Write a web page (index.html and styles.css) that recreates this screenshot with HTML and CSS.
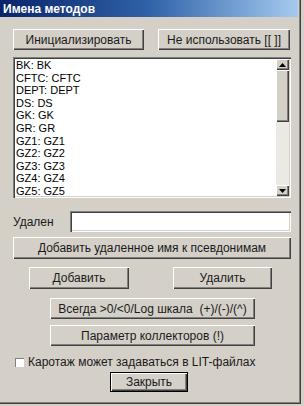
FILE: index.html
```html
<!DOCTYPE html>
<html lang="ru">
<head>
<meta charset="utf-8">
<title>Имена методов</title>
<link rel="stylesheet" href="styles.css">
</head>
<body>
<div class="window">
  <div class="titlebar"><span class="title">Имена методов</span></div>
  <div class="content">
    <div class="top-row">
      <div class="btn btn-init">Инициализировать</div>
      <div class="btn btn-skip">Не использовать [[ ]]</div>
    </div>
    <div class="listbox">
      <ul class="items">
        <li>BK: BK</li>
        <li>CFTC: CFTC</li>
        <li>DEPT: DEPT</li>
        <li>DS: DS</li>
        <li>GK: GK</li>
        <li>GR: GR</li>
        <li>GZ1: GZ1</li>
        <li>GZ2: GZ2</li>
        <li>GZ3: GZ3</li>
        <li>GZ4: GZ4</li>
        <li>GZ5: GZ5</li>
      </ul>
      <div class="scrollbar">
        <div class="sb-btn"><svg width="7" height="4" viewBox="0 0 7 4"><path d="M3.5 0 L7 4 L0 4 Z" fill="#000"/></svg></div>
        <div class="sb-thumb"></div>
        <div class="sb-track"></div>
        <div class="sb-btn"><svg width="7" height="4" viewBox="0 0 7 4"><path d="M0 0 L7 0 L3.5 4 Z" fill="#000"/></svg></div>
      </div>
    </div>
    <div class="field-row">
      <span class="field-label">Удален</span>
      <div class="textfield"></div>
    </div>
    <div class="btn btn-wide">Добавить удаленное имя к псевдонимам</div>
    <div class="pair-row">
      <div class="btn btn-add">Добавить</div>
      <div class="btn btn-del">Удалить</div>
    </div>
    <div class="btn btn-mid btn-always">Всегда &gt;0/&lt;0/Log шкала&nbsp; (+)/(-)/(^)</div>
    <div class="btn btn-mid btn-param">Параметр коллекторов (!)</div>
    <div class="check-row">
      <span class="checkbox"></span>
      <span class="check-label">Каротаж может задаваться в LIT-файлах</span>
    </div>
    <div class="btn btn-default">Закрыть</div>
  </div>
</div>
</body>
</html>
```

FILE: styles.css
```css
html, body {
  margin: 0;
  padding: 0;
  background: #d4d0c8;
}

.window {
  width: 301px;
  height: 404px;
  background: #d4d0c8;
  box-shadow: inset -1px -1px 0 #404040, inset -2px -2px 0 #808080;
  font-family: "Liberation Sans", Arial, sans-serif;
  font-size: 11px;
  color: #000;
  display: flex;
  flex-direction: column;
  overflow: hidden;
}

.titlebar {
  width: 298px;
  height: 17px;
  background: linear-gradient(to right, #0a246a 0%, #2f62a8 50%, #a6caf0 100%);
  display: flex;
  align-items: center;
  padding-left: 3px;
  box-sizing: border-box;
}

.title {
  color: #fff;
  font-weight: bold;
  font-size: 12px;
  font-family: "Liberation Sans", Arial, sans-serif;
}

.content {
  display: flex;
  flex-direction: column;
  align-items: flex-start;
  padding: 12px 0 0 13px;
}

.btn {
  box-sizing: border-box;
  display: flex;
  align-items: center;
  justify-content: center;
  background: #d4d0c8;
  box-shadow: inset 1px 1px 0 #ffffff, inset -1px -1px 0 #404040, inset -2px -2px 0 #808080;
  white-space: nowrap;
  font-size: 12px;
  color: #1a1a1a;
}

.top-row {
  display: flex;
  gap: 14px;
  height: 21px;
}

.btn-init { width: 131px; height: 21px; }
.btn-skip { width: 132px; height: 21px; }

.listbox {
  margin-top: 7px;
  width: 278px;
  height: 141px;
  box-sizing: border-box;
  padding: 2px 2px 0 2px;
  background: #fff;
  box-shadow: inset 1px 1px 0 #808080, inset 2px 2px 0 #404040, inset -1px -1px 0 #ffffff, inset -2px -2px 0 #d4d0c8;
  display: flex;
}

.items {
  list-style: none;
  margin: 0;
  padding: 0 0 0 1px;
  flex: 1;
}

.items li {
  height: 12.6px;
  line-height: 12.6px;
  font-size: 11px;
  white-space: nowrap;
}

.scrollbar {
  width: 13px;
  margin-bottom: 2px;
  display: flex;
  flex-direction: column;
}

.sb-btn {
  height: 11px;
  display: flex;
  align-items: center;
  justify-content: center;
  background: #d4d0c8;
  box-shadow: inset 1px 1px 0 #ffffff, inset -1px -1px 0 #404040, inset -2px -2px 0 #808080;
}

.sb-thumb {
  height: 52px;
  background: #d4d0c8;
  box-shadow: inset 1px 1px 0 #ffffff, inset -1px -1px 0 #404040, inset -2px -2px 0 #808080;
}

.sb-track {
  flex: 1;
  background: #ebe9e4;
}

.field-row {
  margin-top: 13px;
  display: flex;
  align-items: center;
  height: 21px;
}

.field-label {
  width: 57px;
  font-size: 12px;
  color: #1a1a1a;
}

.textfield {
  width: 221px;
  height: 21px;
  box-sizing: border-box;
  background: #fff;
  box-shadow: inset 1px 1px 0 #808080, inset 2px 2px 0 #404040, inset -1px -1px 0 #ffffff, inset -2px -2px 0 #d4d0c8;
}

.btn-wide {
  margin-top: 5px;
  width: 278px;
  height: 22px;
}

.pair-row {
  margin-top: 8px;
  margin-left: 16px;
  display: flex;
  gap: 44px;
}

.btn-add { width: 100px; height: 22px; }
.btn-del { width: 99px; height: 22px; }

.btn-mid {
  margin-left: 37px;
  width: 205px;
  height: 21px;
}

.btn-always { margin-top: 9px; }
.btn-param { margin-top: 6px; }

.check-row {
  margin-top: 9px;
  margin-left: 2px;
  display: flex;
  align-items: center;
  gap: 4px;
  height: 14px;
}

.checkbox {
  width: 9px;
  height: 9px;
  box-sizing: border-box;
  background: #fff;
  box-shadow: inset 1px 1px 0 #808080, inset -1px -1px 0 #ffffff;
}

.check-label {
  font-size: 12px;
  color: #1a1a1a;
}

.btn-default {
  margin-top: 3px;
  margin-left: 97px;
  width: 78px;
  height: 20px;
  box-shadow: inset 0 0 0 1px #000, inset 2px 2px 0 #ffffff, inset -2px -2px 0 #404040, inset -3px -3px 0 #808080;
}
```
